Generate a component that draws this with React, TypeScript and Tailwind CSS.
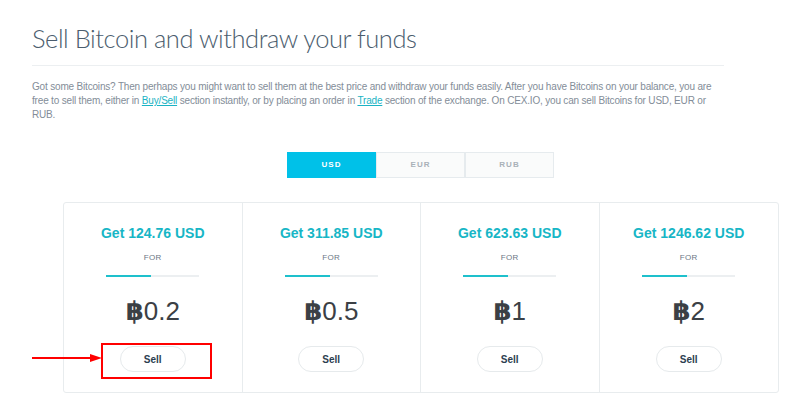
const cards = [
  { get: "124.76", btc: "0.2" },
  { get: "311.85", btc: "0.5" },
  { get: "623.63", btc: "1" },
  { get: "1246.62", btc: "2" },
]

const tabs = ["USD", "EUR", "RUB"]

const App = () => {
  return (
    <div className="w-[800px] h-[414px] bg-white overflow-hidden font-['Liberation_Sans',Arial,sans-serif]">
      {/* header */}
      <div className="pl-[32px] pt-[22px] w-[724px]">
        <h1 className="font-['Lato',sans-serif] font-light text-[25.5px] leading-[32px] tracking-[-0.45px] text-[#4b5d6e]">
          Sell Bitcoin and withdraw your funds
        </h1>
        <div className="mt-[11px] h-px bg-[#eceff1]"></div>
        <p className="mt-[14px] text-[10px] leading-[14px] tracking-[-0.18px] text-[#838d98] whitespace-nowrap">
          Got some Bitcoins? Then perhaps you might want to sell them at the best price and withdraw your funds easily. After you have Bitcoins on your balance, you are
          <br />
          free to sell them, either in <a className="text-[#1ab3c4] underline">Buy/Sell</a> section instantly, or by placing an order in{" "}
          <a className="text-[#1ab3c4] underline">Trade</a> section of the exchange. On CEX.IO, you can sell Bitcoins for USD, EUR or
          <br />
          RUB.
        </p>
      </div>

      {/* currency tabs */}
      <div className="mt-[30px] ml-[287px] flex h-[26px]">
        {tabs.map((t, i) => (
          <div
            key={t}
            className={`w-[89px] flex items-center justify-center text-[8px] font-bold tracking-[1px] ${
              i === 0
                ? "bg-[#00c1e8] text-white"
                : "bg-[#fafbfb] text-[#a9b1b8] border border-[#e6ebee]"
            }`}
          >
            {t}
          </div>
        ))}
      </div>

      {/* cards */}
      <div className="mt-[24px] ml-[63px] w-[716px] h-[191px] grid grid-cols-4 border border-[#e8ecee] rounded-[3px]">
        {cards.map((c, i) => (
          <div
            key={c.get}
            className={`relative flex flex-col items-center ${i < 3 ? "border-r border-[#e8ecee]" : ""}`}
          >
            <div className="mt-[21px] text-[14px] leading-[18px] font-bold text-[#17b6c6]">
              Get {c.get} USD
            </div>
            <div className="mt-[11px] text-[8px] leading-[10px] text-[#6b7785] tracking-[0.3px]">FOR</div>
            <div className="mt-[12px] w-[93px] h-[2px] bg-[#eceff1]">
              <div className="w-[45px] h-[2px] bg-[#1ec0cc]"></div>
            </div>
            <div className="mt-[19px] text-[26px] leading-[30px] text-[#3b4045] flex items-center">
              <span className="font-['DejaVu_Sans',sans-serif] font-bold text-[26px]">฿</span>
              <span>{c.btc}</span>
            </div>
            <button className="mt-[20px] w-[66px] h-[26px] rounded-full border border-[#e6eaec] bg-white text-[10px] font-bold text-[#2c3e50]">
              Sell
            </button>

            {i === 0 && (
              <>
                <div className="absolute left-[37px] top-[140px] w-[111px] h-[36px] border-2 border-[#ff0000]"></div>
                <svg className="absolute left-[-33px] top-[150px]" width="71" height="10" viewBox="0 0 71 10">
                  <line x1="1" y1="5" x2="62" y2="5" stroke="#ff0000" strokeWidth="2" />
                  <polygon points="59,1 71,5 59,9" fill="#ff0000" />
                </svg>
              </>
            )}
          </div>
        ))}
      </div>
    </div>
  )
}

export default App
